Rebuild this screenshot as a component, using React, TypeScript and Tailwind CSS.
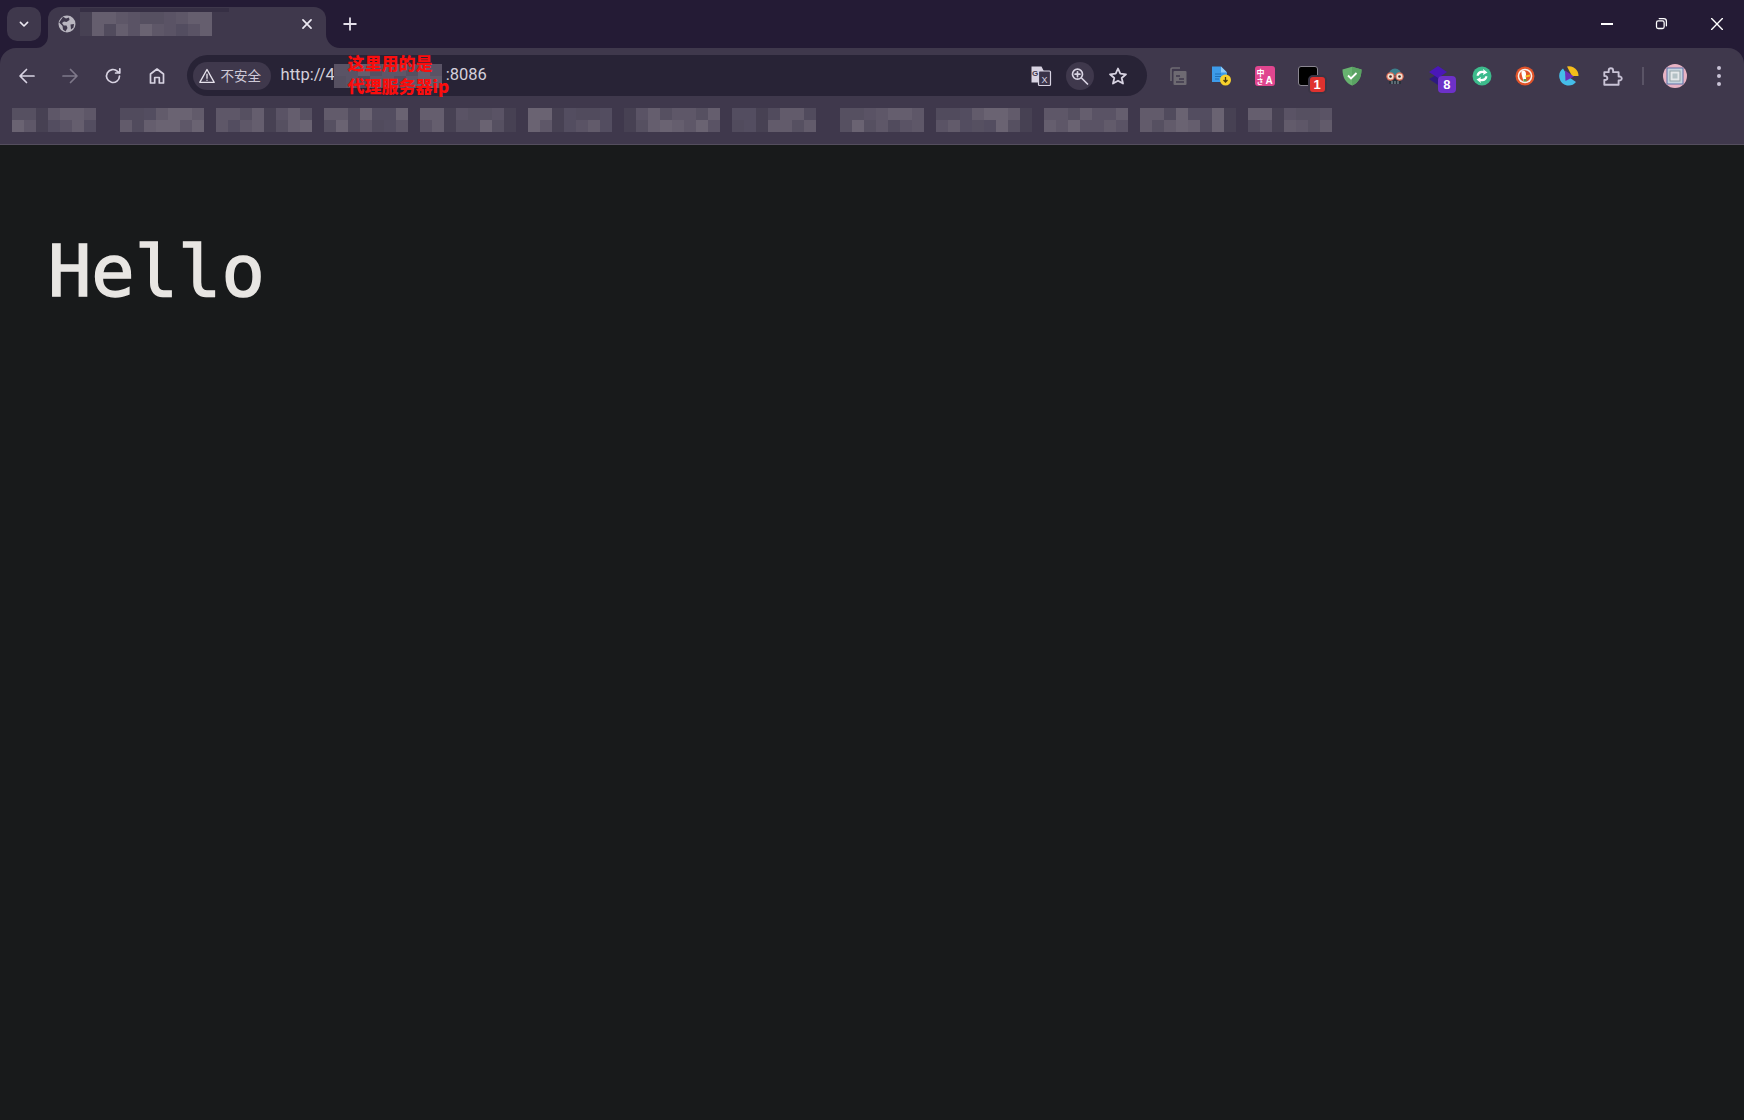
import { ReactNode } from "react";

const shades = ["#514b5d", "#5a5365", "#625b6b", "#565061", "#6a6372", "#5e5768", "#534d60", "#655e6e"];

// pixelated blur blocks, colours come from a small hash of the seed
function Mosaic({ cols, rows = 2, seed = 1, faint = [], className = "" }: { cols: number; rows?: number; seed?: number; faint?: number[]; className?: string }) {
  const cells = Array.from({ length: cols * rows }, (_, i) => {
    const col = i % cols;
    const row = Math.floor(i / cols);
    if (faint.includes(col)) return "#474153";
    return shades[(col * col * 3 + col * 5 + seed * 5 + row * ((col + seed) % 3)) % shades.length];
  });
  return (
    <div className={`flex flex-wrap shrink-0 ${className}`} style={{ width: cols * 12 }}>
      {cells.map((color, i) => (
        <div key={i} className="w-3 h-3" style={{ backgroundColor: color }} />
      ))}
    </div>
  );
}

function ToolButton({ children, className = "" }: { children: ReactNode; className?: string }) {
  return <div className={`relative w-[43.4px] h-8 flex items-center justify-center shrink-0 ${className}`}>{children}</div>;
}

function Stroke({ d, size = 20, color = "#d8d3e2", width = 1.7 }: { d: string; size?: number; color?: string; width?: number }) {
  return (
    <svg width={size} height={size} viewBox="0 0 20 20" fill="none" stroke={color} strokeWidth={width} strokeLinecap="round" strokeLinejoin="round">
      <path d={d} />
    </svg>
  );
}

function Globe() {
  return (
    <svg width="18" height="18" viewBox="0 0 18 18">
      <circle cx="9" cy="9" r="8.5" fill="#b9b6c0" />
      <path d="M5 1.8 8 3.5 11 2.5 11.5 5 8.5 7 6 6.5 4 8 5.8 10.5 8.5 10.5 9.5 13 7.5 16.5 5 14.5 4.5 11 1.2 7.5ZM12.5 9.5 16 9 15.5 12.5 13 14.5Z" fill="#3f384c" />
    </svg>
  );
}

function TranslateIcon() {
  return (
    <svg width="22" height="22" viewBox="0 0 22 22">
      <path d="M1.5 1.5h10l2 4v12h-12z" fill="#d8d3e2" />
      <rect x="8.5" y="6" width="12" height="14.5" rx="1" fill="#3a3348" stroke="#d8d3e2" strokeWidth="1.2" />
      <text x="2" y="11" fontSize="8" fontWeight="700" fill="#3f384c" fontFamily="Liberation Sans, sans-serif">G</text>
      <text x="11.500" y="17.500" fontSize="9" fill="#d8d3e2" fontFamily="Liberation Sans, sans-serif">X</text>
    </svg>
  );
}

function CopyDocIcon() {
  return (
    <svg width="20" height="20" viewBox="0 0 20 20" fill="none">
      <path d="M3 15V3.500A1.500 1.500 0 0 1 4.500 2H12" stroke="#6e6a72" strokeWidth="1.6" />
      <rect x="5.500" y="5" width="13" height="14" rx="1" fill="#6e6a72" />
      <path d="M8 10h4M11 13h5M8 16h8" stroke="#3f384c" strokeWidth="1.4" />
    </svg>
  );
}

function DocDownloadIcon() {
  return (
    <svg width="22" height="22" viewBox="0 0 22 22">
      <path d="M1 1.500h9l6 6V17H1z" fill="#3d9be9" />
      <path d="M10 1.500l6 6h-6z" fill="#8ccaf7" />
      <path d="M4 9h6M4 11.500h6M4 14h4" stroke="#1e6fb8" strokeWidth="1.200" />
      <circle cx="14.500" cy="15" r="5.500" fill="#f7d02b" />
      <path d="M14.500 12v5M12.500 15l2 2 2-2" stroke="#4a3c10" strokeWidth="1.300" fill="none" />
    </svg>
  );
}

function PinkTranslateIcon() {
  return (
    <svg width="20" height="20" viewBox="0 0 20 20">
      <rect width="20" height="20" rx="3" fill="#e0468f" />
      <text x="1.500" y="9.500" fontSize="8" fontWeight="700" fill="#fff" fontFamily="Noto Sans CJK SC, sans-serif">中</text>
      <text x="10.500" y="17.500" fontSize="10" fontWeight="700" fill="#fff" fontFamily="Liberation Sans, sans-serif">A</text>
      <text x="1.500" y="18" fontSize="7" fontWeight="700" fill="#fff" fontFamily="Noto Sans CJK JP, sans-serif">さ</text>
    </svg>
  );
}

function ShieldIcon() {
  return (
    <svg width="20" height="20" viewBox="0 0 20 20">
      <path d="M10 .8 19.500 3.500C19.500 12 16 17 10 19.500 4 17 .5 12 .5 3.500Z" fill="#67b26f" />
      <path d="M10 .8 19.500 3.500C19.500 12 16 17 10 19.500Z" fill="#5aa363" />
      <path d="M6 9.500 9 12.500 14.500 7" stroke="#fff" strokeWidth="1.800" fill="none" />
    </svg>
  );
}

function GlassesIcon() {
  return (
    <svg width="20" height="20" viewBox="0 0 20 20">
      <path d="M3.500 9A6.500 6.500 0 0 1 16.500 9z" fill="#3c7f8c" />
      <path d="M4 13h12v5H4z" fill="#26303a" />
      <path d="M7 15v3M10 15v3M13 15v3" stroke="#8fa1a8" strokeWidth="1" />
      <circle cx="5.500" cy="10.500" r="3.600" fill="#f3e3d3" stroke="#e2715a" strokeWidth="1.200" />
      <circle cx="14.500" cy="10.500" r="3.600" fill="#f3e3d3" stroke="#e2715a" strokeWidth="1.200" />
      <circle cx="5.500" cy="10.500" r="1.300" fill="#3b2a2a" />
      <circle cx="14.500" cy="10.500" r="1.300" fill="#3b2a2a" />
    </svg>
  );
}

function LayersIcon() {
  return (
    <svg width="22" height="22" viewBox="0 0 22 22">
      <path d="M10 9 19 14 10 20 1 14z" fill="#2d1a80" />
      <path d="M10 1 19 7 10 13 1 7z" fill="#4a17b8" />
    </svg>
  );
}

function SyncIcon() {
  return (
    <svg width="20" height="20" viewBox="0 0 20 20">
      <circle cx="10" cy="10" r="9.500" fill="#3dbb8c" />
      <path d="M4.500 9.500C5 6 8 4 11.500 5L11 3l4.500 3.500L11 9l.5-2C9 6.500 7 8 6.500 10zM15.500 10.500C15 14 12 16 8.500 15L9 17l-4.500-3.500L9 11l-.5 2c2.500.5 4.500-1 5-3z" fill="#fff" />
    </svg>
  );
}

function DuckIcon() {
  return (
    <svg width="20" height="20" viewBox="0 0 20 20">
      <circle cx="10" cy="10" r="9.500" fill="#e2542a" />
      <circle cx="10" cy="10" r="7.300" fill="#f7f3ee" />
      <circle cx="10" cy="10" r="5.800" fill="#e2542a" />
      <path d="M6.500 5.500C9 4 11 5 11 8v7.500H8.500C8 12 6 9 6.500 5.500z" fill="#fff" />
      <path d="M10.500 9.500 15 8.500v2l-4.500 1z" fill="#f5c026" />
      <path d="M8.500 13h3v2.500h-3z" fill="#5aa84a" />
    </svg>
  );
}

function PlayIcon() {
  return (
    <svg width="20" height="20" viewBox="0 0 20 20">
      <path d="M8 .5A9.500 9.500 0 0 1 19.500 10H13z" fill="#f4bd1a" />
      <path d="M8 19.400A9.500 9.500 0 0 1 4 2.500L9 10.500 17 16A9.500 9.500 0 0 1 8 19.400z" fill="#45bde8" />
      <path d="M6 4.500 15 10.500 6.500 15z" fill="#6b2fb8" />
    </svg>
  );
}

function Avatar() {
  return (
    <svg width="24" height="24" viewBox="0 0 24 24">
      <circle cx="12" cy="12" r="12" fill="#e8b3c4" />
      <rect x="4" y="4" width="16" height="16" fill="#c5d3df" stroke="#6173a8" strokeWidth="1" />
      <rect x="7" y="7" width="10" height="10" fill="#e4e8ea" stroke="#94a3a8" strokeWidth="1" />
      <rect x="9.500" y="9.500" width="5" height="5" fill="#b4c2c6" />
    </svg>
  );
}

const bookmarks = [
  { cols: 7, faint: [2] },
  { cols: 7, faint: [] },
  { cols: 8, faint: [4] },
  { cols: 7, faint: [] },
  { cols: 8, faint: [2, 7] },
  { cols: 7, faint: [2] },
  { cols: 8, faint: [0] },
  { cols: 7, faint: [2] },
  { cols: 7, faint: [] },
  { cols: 8, faint: [7] },
  { cols: 7, faint: [] },
  { cols: 8, faint: [7] },
  { cols: 7, faint: [2] },
];

export default function App() {
  return (
    <div className="w-[1744px] h-[1120px] flex flex-col overflow-hidden bg-[#181a1b] font-['Noto_Sans','Noto_Sans_CJK_SC',sans-serif]">
      {/* Tab strip */}
      <div className="h-12 shrink-0 flex bg-[#241b35] pl-[7px]">
        <div className="w-[34px] h-[34px] mt-[7px] rounded-[10px] bg-[#3f384c] flex items-center justify-center">
          <Stroke d="M5.500 8 10 12.500 14.500 8" size={16} color="#ece9f2" width={2} />
        </div>

        <div className="relative w-[278px] h-[41px] mt-[7px] ml-[7px] rounded-t-[12px] bg-[#3f384c] flex items-center pl-[10px] pb-[7px]">
          {/* flared tab corners */}
          <svg className="absolute left-[-12px] bottom-0" width="12" height="12" viewBox="0 0 12 12">
            <path d="M12 0V12H0A12 12 0 0 0 12 0z" fill="#3f384c" />
          </svg>
          <svg className="absolute right-[-14px] bottom-0" width="14" height="14" viewBox="0 0 14 14">
            <path d="M0 0V14H14A14 14 0 0 1 0 0z" fill="#3f384c" />
          </svg>
          <div className="absolute left-[32px] top-[1px] w-[149px] h-1 bg-[#362f44]" />
          <Globe />
          <Mosaic cols={1} seed={2} faint={[0]} className="ml-[4px]" />
          <Mosaic cols={10} seed={3} />
          <div className="ml-auto mr-[10px]">
            <Stroke d="M5.500 5.500 14.500 14.500M14.500 5.500 5.500 14.500" size={18} color="#ece9f2" width={1.900} />
          </div>
        </div>

        <div className="ml-[7px] mt-[7px] w-[34px] h-[34px] flex items-center justify-center">
          <Stroke d="M10 3.500v13M3.500 10h13" size={18} color="#e4e0ea" width={2} />
        </div>

        {/* Window controls */}
        <div className="ml-auto flex items-start pt-[14px]">
          <div className="w-[54px] h-5 flex items-center justify-center">
            <div className="w-3 h-[1.5px] bg-white" />
          </div>
          <div className="w-[54px] h-5 flex items-center justify-center">
            <Stroke d="M5 8.500A2 2 0 0 1 7 6.500h4.500a2 2 0 0 1 2 2V13a2 2 0 0 1-2 2H7a2 2 0 0 1-2-2zM8 4h5a3 3 0 0 1 3 3v5" size={18} color="#ffffff" width={1.400} />
          </div>
          <div className="w-[56px] pl-[2px] h-5 flex items-center justify-center">
            <Stroke d="M4 4 16 16M16 4 4 16" size={18} color="#ffffff" width={1.500} />
          </div>
        </div>
      </div>

      {/* Toolbar */}
      <div className="h-[55px] shrink-0 bg-[#241b35]">
        <div className="h-full bg-[#3f384c] rounded-t-[16px] flex items-center pl-[5px]">
          <ToolButton>
            <Stroke d="M17 10H3.500M9.500 3.500 3 10l6.500 6.500" color="#d8d3e2" />
          </ToolButton>
          <ToolButton>
            <Stroke d="M3 10h13.500M10.500 3.500 17 10l-6.500 6.500" color="#7e7889" />
          </ToolButton>
          <ToolButton>
            <Stroke d="M16.500 10a6.500 6.500 0 1 1-2-4.700l2 1.700M16.800 2.800V7h-4.200" color="#d8d3e2" />
          </ToolButton>
          <ToolButton>
            <Stroke d="M3.500 17V8L10 3l6.500 5v9h-4.200v-5.500H7.700V17z" color="#d8d3e2" />
          </ToolButton>

          {/* Address bar */}
          <div className="relative w-[960px] h-[41px] ml-[8px] rounded-full bg-[#282336] flex items-center pl-[6px] pr-[19px]">
            <div className="h-7 w-[78px] rounded-full bg-[#3f384c] flex items-center gap-[5px] pl-[5px] shrink-0">
              <Stroke d="M10 2.800 18 17H2zM10 8v4.500M10 14.500v.3" size={18} color="#e6e2ec" width={1.500} />
              <span className="text-[13.500px] leading-none text-[#cfcad8] font-['Noto_Sans_CJK_SC',sans-serif]">不安全</span>
            </div>
            <div className="flex items-center ml-[10px]">
              <span className="text-[16.500px] text-[#d4d0db] font-['Roboto',sans-serif]">http://4</span>
              <Mosaic cols={9} seed={5} className="ml-[-1px]" />
              <span className="text-[16.500px] text-[#d4d0db] ml-[4px] font-['Roboto',sans-serif]">:8086</span>
            </div>
            <div className="ml-auto flex items-center">
              <TranslateIcon />
              <div className="w-7 h-7 ml-[14px] rounded-full bg-[#3f384c] flex items-center justify-center">
                <Stroke d="M12.500 8.200a5 5 0 1 1-10 0 5 5 0 0 1 10 0zM11.500 12l6 6M7.500 5.800v4.800M5.100 8.200h4.800" size={20} color="#d8d3e2" />
              </div>
              <div className="ml-[14px]">
                <Stroke d="M10 2.500 12.300 7.700 18 8.300 13.700 12 15 17.500 10 14.700 5 17.500 6.300 12 2 8.300 7.700 7.700z" color="#d8d3e2" width={1.800} />
              </div>
            </div>
            {/* red note pasted over the screenshot */}
            <div className="absolute left-[161px] top-[-4px] text-[17px] leading-[23px] font-black text-[#fb0d0d] font-['Noto_Sans_CJK_SC',sans-serif] whitespace-nowrap">
              这里用的是
              <br />
              代理服务器ip
            </div>
          </div>

          {/* Extensions */}
          <div className="flex items-center ml-[10px]">
            <ToolButton><CopyDocIcon /></ToolButton>
            <ToolButton><DocDownloadIcon /></ToolButton>
            <ToolButton><PinkTranslateIcon /></ToolButton>
            <ToolButton>
              <div className="w-5 h-5 rounded-[3px] bg-black border border-[#8a8691]" />
              <div className="absolute left-[21px] top-[15px] w-[19px] h-[19px] rounded-[5px] bg-[#e0322f] border-2 border-[#3a3545] text-white text-[13px] leading-[15px] font-bold text-center font-['Liberation_Sans',sans-serif]">1</div>
            </ToolButton>
            <ToolButton><ShieldIcon /></ToolButton>
            <ToolButton><GlassesIcon /></ToolButton>
            <ToolButton>
              <LayersIcon />
              <div className="absolute left-[21px] top-[16px] w-[18px] h-[17px] rounded-[4px] bg-[#6d31c8] text-white text-[13px] leading-[17px] font-bold text-center font-['Liberation_Sans',sans-serif]">8</div>
            </ToolButton>
            <ToolButton><SyncIcon /></ToolButton>
            <ToolButton><DuckIcon /></ToolButton>
            <ToolButton><PlayIcon /></ToolButton>
            <ToolButton>
              <Stroke d="M3 6.500h4V5a2 2 0 0 1 4 0v1.500h5v4h1.500a1.800 1.800 0 0 1 0 3.500H16v4H3v-4.500c2 .5 2.800-.7 2.800-1.500S5 9.500 3 10z" size={22} color="#c9c3d6" />
            </ToolButton>
            <div className="w-[2px] h-[18px] ml-[8px] bg-[#5a5466]" />
            <ToolButton className="ml-[9px]"><Avatar /></ToolButton>
            <ToolButton className="ml-[1px]">
              <div className="flex flex-col gap-[4px]">
                <div className="w-1 h-1 rounded-full bg-[#c9c3d6]" />
                <div className="w-1 h-1 rounded-full bg-[#c9c3d6]" />
                <div className="w-1 h-1 rounded-full bg-[#c9c3d6]" />
              </div>
            </ToolButton>
          </div>
        </div>
      </div>

      {/* Bookmarks bar */}
      <div className="h-[42px] shrink-0 bg-[#3f384c] border-b border-b-[#544e5e] flex items-start pt-[5px] pl-[12px] gap-3">
        {bookmarks.map((b, i) => (
          <Mosaic key={i} cols={b.cols} seed={i + 7} faint={b.faint} className={i === 0 || i === 7 ? "mr-3" : ""} />
        ))}
      </div>

      {/* Page */}
      <div className="flex-1 pl-[48px] pt-[84px] font-['DejaVu_Sans_Mono',monospace] text-[72px] leading-[84px] text-[#e8e6e3] [-webkit-text-stroke:1.5px_#e8e6e3]">Hello</div>
    </div>
  );
}
